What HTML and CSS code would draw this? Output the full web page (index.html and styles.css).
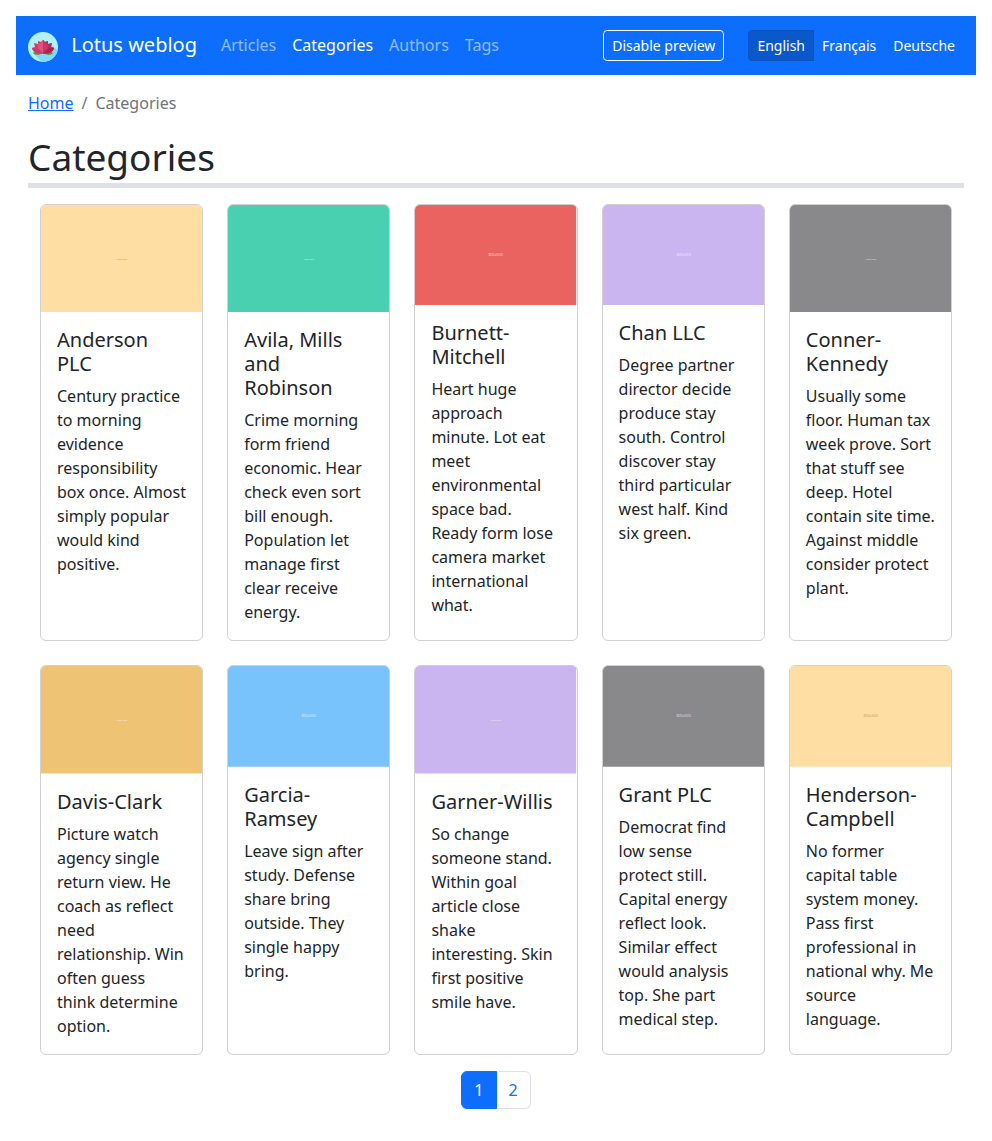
FILE: index.html
```html
<!DOCTYPE html>
<html lang="en">
<head>
<meta charset="utf-8">
<meta name="viewport" content="width=device-width, initial-scale=1">
<title>Categories - Lotus weblog</title>
<link rel="stylesheet" href="styles.css">
</head>
<body>
<nav class="navbar">
  <a class="brand" href="#">
    <svg class="brand-logo" viewBox="0 0 30 30" aria-hidden="true">
      <defs><clipPath id="disc"><circle cx="15" cy="15" r="15"/></clipPath></defs>
      <g clip-path="url(#disc)">
        <path fill="#b3f0f5" d="M0 0h30v30H0z"/>
        <path fill="#80d8fb" d="M5 21l10-3 10-4 5 5v11H14z"/>
        <path fill="#639a2e" d="M5 21c2-2 5-2 10-1 5-1 8-1 10 1-2 3-7 2-10 0-3 2-8 3-10 0z"/>
        <path fill="#d23c6c" d="M4 16l3-1-1-4 4 1V9l3 1 2-2 2 2 3-1v3l4-1-1 4 3 1c-1 4-5 6-11 5.500C9 22 5 20 4 16z"/>
        <path fill="#b92a5b" d="M15 8l2 2 3-1v3l4-1-1 4 3 1c-1 4-5 6-11 5.500z"/>
        <path fill="#e0527d" d="M10 12l3-2 2-2v13c-4-1-6-5-5-9z"/>
        <path fill="#c93668" d="M15 8l2 2 3 3c1 3-2 6-5 8z"/>
        <path fill="#ce3a69" d="M4 16c4-1 8 1 11 5.500C9 22 5 20 4 16z"/>
        <path fill="#a92451" d="M26 16c-4-1-8 1-11 5.500C21 22 25 20 26 16z"/>
      </g>
    </svg>
    Lotus weblog</a>
  <ul class="nav-links">
    <li><a href="#">Articles</a></li>
    <li><a class="active" href="#" aria-current="page">Categories</a></li>
    <li><a href="#">Authors</a></li>
    <li><a href="#">Tags</a></li>
  </ul>
  <div class="nav-tools">
    <button class="btn btn-outline" type="button">Disable preview</button>
    <div class="languages" role="group" aria-label="Language">
      <a class="btn active" href="#">English</a>
      <a class="btn" href="#">Français</a>
      <a class="btn" href="#">Deutsche</a>
    </div>
  </div>
</nav>
<main class="content">
  <nav aria-label="Breadcrumb">
    <ol class="breadcrumb">
      <li><a href="#">Home</a></li>
      <li aria-current="page">Categories</li>
    </ol>
  </nav>
  <h1 class="page-title">Categories</h1>
  <div class="cards">
    <article class="card">
      <svg class="cover cream" viewBox="0 0 1200 800"><rect width="1200" height="800"/><text x="600" y="406">1200x800</text></svg>
      <div class="card-body"><h2>Anderson PLC</h2><p>Century practice to morning evidence responsibility box once. Almost simply popular would kind positive.</p></div>
    </article>
    <article class="card">
      <svg class="cover green" viewBox="0 0 1200 800"><rect width="1200" height="800"/><text x="600" y="406">1200x800</text></svg>
      <div class="card-body"><h2>Avila, Mills and Robinson</h2><p>Crime morning form friend economic. Hear check even sort bill enough. Population let manage first clear receive energy.</p></div>
    </article>
    <article class="card">
      <svg class="cover red" viewBox="0 0 800 500"><rect width="800" height="500"/><text x="400" y="252">800x500</text></svg>
      <div class="card-body"><h2>Burnett-Mitchell</h2><p>Heart huge approach minute. Lot eat meet environmental space bad. Ready form lose camera market international what.</p></div>
    </article>
    <article class="card">
      <svg class="cover purple" viewBox="0 0 800 500"><rect width="800" height="500"/><text x="400" y="252">800x500</text></svg>
      <div class="card-body"><h2>Chan LLC</h2><p>Degree partner director decide produce stay south. Control discover stay third particular west half. Kind six green.</p></div>
    </article>
    <article class="card">
      <svg class="cover gray" viewBox="0 0 1200 800"><rect width="1200" height="800"/><text x="600" y="406">1200x800</text></svg>
      <div class="card-body"><h2>Conner-Kennedy</h2><p>Usually some floor. Human tax week prove. Sort that stuff see deep. Hotel contain site time. Against middle consider protect plant.</p></div>
    </article>
    <article class="card">
      <svg class="cover gold" viewBox="0 0 1200 800"><rect width="1200" height="800"/><text x="600" y="406">1200x800</text></svg>
      <div class="card-body"><h2>Davis-Clark</h2><p>Picture watch agency single return view. He coach as reflect need relationship. Win often guess think determine option.</p></div>
    </article>
    <article class="card">
      <svg class="cover blue" viewBox="0 0 800 500"><rect width="800" height="500"/><text x="400" y="252">800x500</text></svg>
      <div class="card-body"><h2>Garcia-Ramsey</h2><p>Leave sign after study. Defense share bring outside. They single happy bring.</p></div>
    </article>
    <article class="card">
      <svg class="cover purple" viewBox="0 0 1200 800"><rect width="1200" height="800"/><text x="600" y="406">1200x800</text></svg>
      <div class="card-body"><h2>Garner-Willis</h2><p>So change someone stand. Within goal article close shake interesting. Skin first positive smile have.</p></div>
    </article>
    <article class="card">
      <svg class="cover gray" viewBox="0 0 800 500"><rect width="800" height="500"/><text x="400" y="252">800x500</text></svg>
      <div class="card-body"><h2>Grant PLC</h2><p>Democrat find low sense protect still. Capital energy reflect look. Similar effect would analysis top. She part medical step.</p></div>
    </article>
    <article class="card">
      <svg class="cover cream" viewBox="0 0 800 500"><rect width="800" height="500"/><text x="400" y="252">800x500</text></svg>
      <div class="card-body"><h2>Henderson-Campbell</h2><p>No former capital table system money. Pass first professional in national why. Me source language.</p></div>
    </article>
  </div>
  <nav aria-label="Pages">
    <ul class="pagination">
      <li><a class="active" href="#" aria-current="page">1</a></li>
      <li><a href="#">2</a></li>
    </ul>
  </nav>
</main>
</body>
</html>
```
FILE: styles.css
```css
* { box-sizing: border-box; }

body {
  margin: 0;
  padding: 16px;
  background: #fff;
  color: #212529;
  font-family: "Noto Sans", "Liberation Sans", sans-serif;
  font-size: 16px;
  line-height: 24px;
}

ul, ol { margin: 0; padding: 0; list-style: none; }

/* Top bar */
.navbar {
  display: flex;
  align-items: center;
  padding: 8px 12px;
  background: #0d6efd;
}
.brand {
  margin-right: 16px;
  padding: 6px 0 5px;
  color: #fff;
  font-size: 20px;
  line-height: 30px;
  text-decoration: none;
  white-space: nowrap;
}
.brand-logo {
  width: 30px;
  height: 30px;
  margin-right: 8px;
  vertical-align: middle;
}
.nav-links { display: flex; }
.nav-links a {
  display: block;
  padding: 8px;
  color: rgba(255, 255, 255, .55);
  text-decoration: none;
}
.nav-links .active { color: #fff; }
.nav-tools { display: flex; gap: 24px; margin-left: auto; }

.btn {
  padding: 4px 8px;
  border: 1px solid transparent;
  background: none;
  color: #fff;
  font-family: inherit;
  font-size: 14px;
  line-height: 21px;
  text-decoration: none;
}
.btn-outline { border-color: #f8f9fa; border-radius: 4px; }
.languages { display: flex; }
.languages .btn + .btn { margin-left: -1px; }
.languages .active {
  border-color: #0a53be;
  border-radius: 4px 0 0 4px;
  background: #0a58ca;
}

/* Page heading */
.content { padding: 16px 12px; }
.breadcrumb { display: flex; margin-bottom: 16px; color: #6c757d; }
.breadcrumb li + li::before { content: "/"; padding: 0 8px; }
.breadcrumb a { color: #0d6efd; }
.page-title {
  margin: 0 0 16px;
  padding: 2px 0;
  border-bottom: 5px solid #dee2e6;
  font-size: 37px;
  font-weight: 400;
  line-height: 1.3;
}

/* Category cards */
.cards {
  display: grid;
  grid-template-columns: repeat(5, minmax(0, 1fr));
  gap: 24px;
  padding: 0 12px;
}
.card {
  overflow: hidden;
  border: 1px solid #d0d0d1;
  border-radius: 6px;
}
.cover { display: block; width: 100%; }
.cover text {
  fill: #fff;
  fill-opacity: .7;
  font-size: 18px;
  text-anchor: middle;
}
.cream rect { fill: #ffdea3; }
.cream text { fill: #a08040; }
.green rect { fill: #48d0b0; }
.red rect { fill: #eb6361; }
.purple rect { fill: #cab5f0; }
.gray rect { fill: #89898b; }
.gold rect { fill: #eec374; }
.blue rect { fill: #79c3fd; }
.card-body { padding: 16px; }
.card h2 {
  margin: 0 0 8px;
  font-size: 20px;
  font-weight: 400;
  line-height: 24px;
}
.card p { margin: 0; }

.pagination { display: flex; justify-content: center; margin-top: 16px; }
.pagination a {
  display: block;
  padding: 6px 12px;
  border: 1px solid #dee2e6;
  border-left: 0;
  border-radius: 0 6px 6px 0;
  color: #0d6efd;
  text-decoration: none;
}
.pagination .active {
  border: 1px solid #0d6efd;
  border-radius: 6px 0 0 6px;
  background: #0d6efd;
  color: #fff;
}
```
